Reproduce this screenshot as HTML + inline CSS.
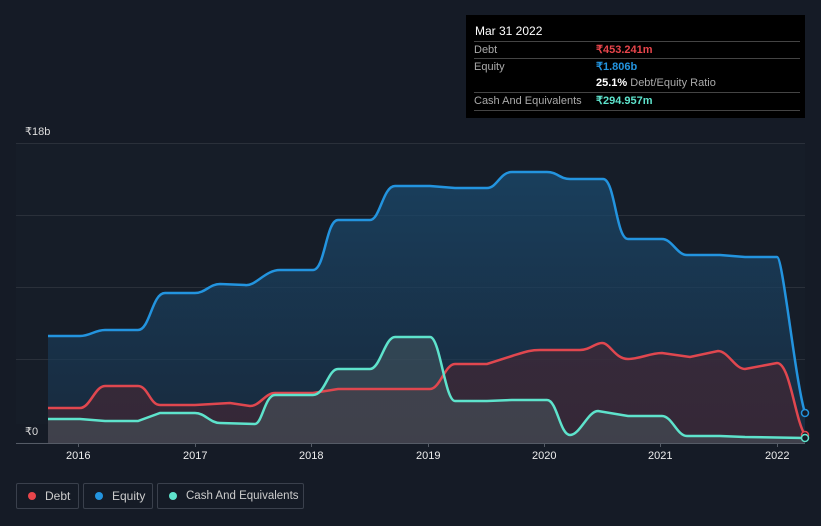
<!DOCTYPE html>
<html><head><style>
body{margin:0;width:821px;height:526px;background:#151b26;font-family:"Liberation Sans",sans-serif;overflow:hidden;position:relative}
.tt{position:absolute;left:466px;top:15px;width:339px;height:103px;background:#000;}
.tt .h{position:absolute;left:9px;top:9px;color:#fff;font-size:12px}
.row{position:absolute;left:8px;width:326px;border-top:1px solid #444;font-size:11px;color:#aaa;height:17px;line-height:17px;white-space:nowrap}
.row span{position:absolute;left:122px;font-weight:bold}
.leg{position:absolute;top:483px;height:26px;border:1px solid #3a404c;border-radius:2px;color:#ccc;font-size:12px;line-height:24px;box-sizing:border-box;white-space:nowrap}
.leg i{position:absolute;left:11px;top:8px;width:8px;height:8px;border-radius:50%}
.yr{position:absolute;top:450px;color:#eee;font-size:11px}
</style></head><body>
<svg width="821" height="526" style="position:absolute;left:0;top:0">
<defs>
<linearGradient id="ge" x1="0" y1="0" x2="0" y2="1"><stop offset="0" stop-color="#1a4a6e" stop-opacity=".75"/><stop offset="1" stop-color="#1a3550" stop-opacity=".55"/></linearGradient>
</defs>
<rect x="16" y="143" width="789" height="300" fill="#161d28"/>
<g stroke="#2a303a" stroke-width="1"><line x1="16" y1="143.5" x2="805" y2="143.5"/><line x1="16" y1="215.5" x2="805" y2="215.5"/><line x1="16" y1="287.5" x2="805" y2="287.5"/><line x1="16" y1="359.5" x2="805" y2="359.5"/></g>
<path d="M48,336 L80,336 C90,336 95,330 105,330 L138,330 C150,330 152,293 165,293 L195,293 C205,293 210,284 220,284 L245,285 C255,287 265,270 280,270 L313,270 C325,270 326,220 338,220 L370,220 C380,220 383,186 395,186 L430,186 L455,188 L487,188 C497,188 500,172 512,172 L547,172 C557,172 560,179 570,179 L603,179 C615,179 616,239 628,239 L662,239 C672,239 677,255 687,255 L720,255 L745,257 L777,257 C783,257 795,380 805,413 L805,443 L48,443Z" fill="url(#ge)" stroke="none"/>
<path d="M48,408 L80,408 C90,408 95,386 105,386 L138,386 C148,386 150,405 160,405 L195,405 L230,403 L250,406 C260,406 265,393 275,393 L313,393 L338,389 L430,389 C440,389 445,364 455,364 L487,364 L512,356 C525,352 530,350 540,350 L580,350 C590,350 595,343 602,343 C610,343 615,359 628,359 C640,359 650,353 662,353 L690,357 L718,351 C728,351 735,369 745,369 L777,363 C790,363 795,420 805,435 L805,443 L48,443Z" fill="#4a2632" fill-opacity=".6"/>
<path d="M48,419 L80,419 L105,421 L138,421 L160,413 L195,413 C205,413 210,423 220,423 L255,424 C262,424 265,395 275,395 L313,395 C325,395 328,369 338,369 L370,369 C380,369 385,337 395,337 L430,337 C440,337 445,401 455,401 L487,401 L512,400 L547,400 C557,400 560,435 570,435 C580,435 588,411 598,411 L628,416 L662,416 C672,416 677,436 687,436 L720,436 L745,437 L805,438 L805,443 L48,443Z" fill="#4a5a60" fill-opacity=".5"/>
<path d="M48,336 L80,336 C90,336 95,330 105,330 L138,330 C150,330 152,293 165,293 L195,293 C205,293 210,284 220,284 L245,285 C255,287 265,270 280,270 L313,270 C325,270 326,220 338,220 L370,220 C380,220 383,186 395,186 L430,186 L455,188 L487,188 C497,188 500,172 512,172 L547,172 C557,172 560,179 570,179 L603,179 C615,179 616,239 628,239 L662,239 C672,239 677,255 687,255 L720,255 L745,257 L777,257 C783,257 795,380 805,413" fill="none" stroke="#2394df" stroke-width="2.5"/>
<path d="M48,408 L80,408 C90,408 95,386 105,386 L138,386 C148,386 150,405 160,405 L195,405 L230,403 L250,406 C260,406 265,393 275,393 L313,393 L338,389 L430,389 C440,389 445,364 455,364 L487,364 L512,356 C525,352 530,350 540,350 L580,350 C590,350 595,343 602,343 C610,343 615,359 628,359 C640,359 650,353 662,353 L690,357 L718,351 C728,351 735,369 745,369 L777,363 C790,363 795,420 805,435" fill="none" stroke="#e0474f" stroke-width="2.5"/>
<path d="M48,419 L80,419 L105,421 L138,421 L160,413 L195,413 C205,413 210,423 220,423 L255,424 C262,424 265,395 275,395 L313,395 C325,395 328,369 338,369 L370,369 C380,369 385,337 395,337 L430,337 C440,337 445,401 455,401 L487,401 L512,400 L547,400 C557,400 560,435 570,435 C580,435 588,411 598,411 L628,416 L662,416 C672,416 677,436 687,436 L720,436 L745,437 L805,438" fill="none" stroke="#5ee3cc" stroke-width="2.5"/>
<line x1="16" y1="443.5" x2="805" y2="443.5" stroke="#555b66"/>
<g stroke="#555b66"><line x1="78.5" y1="443" x2="78.5" y2="447"/><line x1="195.5" y1="443" x2="195.5" y2="447"/><line x1="311.5" y1="443" x2="311.5" y2="447"/><line x1="428.5" y1="443" x2="428.5" y2="447"/><line x1="544.5" y1="443" x2="544.5" y2="447"/><line x1="660.5" y1="443" x2="660.5" y2="447"/><line x1="777.5" y1="443" x2="777.5" y2="447"/></g>
<circle cx="805" cy="413" r="3.5" fill="#151b26" stroke="#2394df" stroke-width="1.5"/>
<circle cx="805" cy="435" r="3.5" fill="#151b26" stroke="#e0474f" stroke-width="1.5"/>
<circle cx="805" cy="438" r="3.5" fill="#151b26" stroke="#5ee3cc" stroke-width="1.5"/>
<rect x="16" y="424" width="32" height="18" fill="#151b26"/>
</svg>
<div style="position:absolute;left:25px;top:125px;color:#ddd;font-size:11px">₹18b</div>
<div style="position:absolute;left:25px;top:425px;color:#ddd;font-size:11px">₹0</div>
<div class="yr" style="left:66px">2016</div><div class="yr" style="left:183px">2017</div><div class="yr" style="left:299px">2018</div><div class="yr" style="left:416px">2019</div><div class="yr" style="left:532px">2020</div><div class="yr" style="left:648px">2021</div><div class="yr" style="left:765px">2022</div>
<div class="tt"><div class="h">Mar 31 2022</div>
<div class="row" style="top:26px">Debt<span style="color:#e8454b">₹453.241m</span></div>
<div class="row" style="top:43px">Equity<span style="color:#2394df">₹1.806b</span></div>
<div class="row" style="top:60px;border-top:none"><span style="color:#fff">25.1% <b style="color:#aaa;font-weight:normal">Debt/Equity Ratio</b></span></div>
<div class="row" style="top:77px;border-bottom:1px solid #444">Cash And Equivalents<span style="color:#5ee3cc">₹294.957m</span></div>
</div>
<div class="leg" style="left:16px;width:63px"><i style="background:#e8454b"></i><span style="position:absolute;left:28px">Debt</span></div>
<div class="leg" style="left:83px;width:70px"><i style="background:#2394df"></i><span style="position:absolute;left:28px">Equity</span></div>
<div class="leg" style="left:157px;width:147px"><i style="background:#5ee3cc"></i><span style="position:absolute;left:28px;font-size:11.5px">Cash And Equivalents</span></div>
</body></html>
